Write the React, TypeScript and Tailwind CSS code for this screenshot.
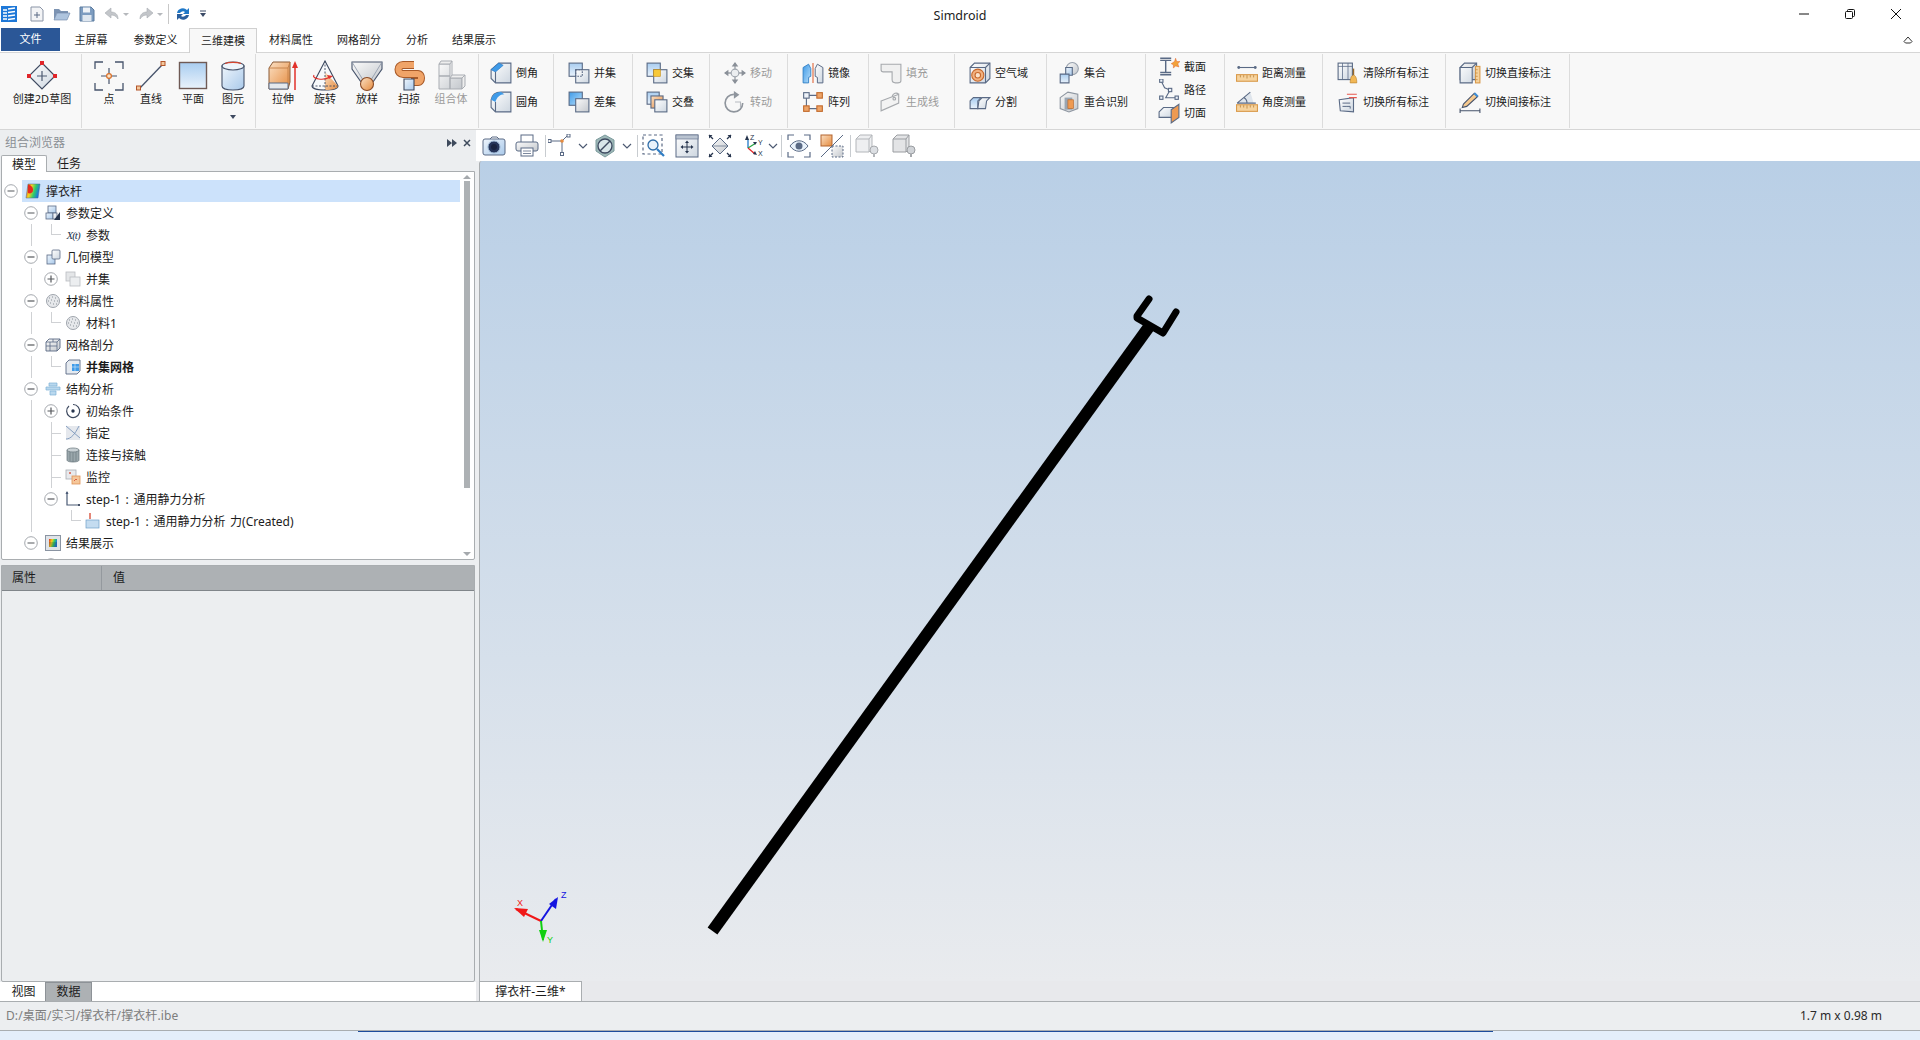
import React from "react";

const L = "#5a6a85";
const Box = ({ c, children }: { c: string; children: React.ReactNode }) => (
  <svg viewBox="0 0 32 32" className={c} fill="none">{children}</svg>
);
const I = ({ children }: { children: React.ReactNode }) => (
  <svg viewBox="0 0 20 20" className="w-[22px] h-[22px]" fill="none">{children}</svg>
);
const T = ({ children }: { children: React.ReactNode }) => (
  <svg viewBox="0 0 16 16" className="w-4 h-4" fill="none">{children}</svg>
);

const Defs = () => (
  <svg className="absolute w-0 h-0">
    <defs>
      <linearGradient id="gb" x1="0" y1="0" x2="1" y2="1"><stop offset="0" stopColor="#eef5fc" /><stop offset="1" stopColor="#a9c9ea" /></linearGradient>
      <linearGradient id="gbs" x1="0" y1="0" x2="1" y2="1"><stop offset="0" stopColor="#3f9be8" /><stop offset="1" stopColor="#b9def9" /></linearGradient>
      <linearGradient id="gp" x1="0" y1="0" x2="0" y2="1"><stop offset="0" stopColor="#a9cdf0" /><stop offset="1" stopColor="#e9f2fb" /></linearGradient>
      <linearGradient id="go" x1="0" y1="0" x2="1" y2="1"><stop offset="0" stopColor="#fbe0c4" /><stop offset="1" stopColor="#e58b3e" /></linearGradient>
      <linearGradient id="gg" x1="0" y1="0" x2="1" y2="1"><stop offset="0" stopColor="#fafafa" /><stop offset="1" stopColor="#c4c8cd" /></linearGradient>
      <linearGradient id="gw" x1="0" y1="0" x2="1" y2="1"><stop offset="0" stopColor="#ffffff" /><stop offset="1" stopColor="#cdd6e0" /></linearGradient>
      <linearGradient id="gr" x1="0" y1="0" x2="1" y2="0.3"><stop offset="0" stopColor="#e62a1e" /><stop offset="0.4" stopColor="#f5d21e" /><stop offset="0.7" stopColor="#2ecb6b" /><stop offset="1" stopColor="#1a76e0" /></linearGradient>
    </defs>
  </svg>
);

const LG = {
  sketch: (
    <Box c="w-8 h-8">
      <path d="M16 3 29 16 16 29 3 16Z" fill="url(#gw)" stroke="#3e4a60" strokeWidth="1.2" />
      <path d="M16 11v10M11 16h10" stroke="#4d5a72" strokeWidth="1.2" />
      <rect x="14" y="1" width="4" height="4" fill="#e0262a" /><rect x="27" y="14" width="4" height="4" fill="#e0262a" /><rect x="1" y="14" width="4" height="4" fill="#e0262a" />
    </Box>
  ),
  point: (
    <Box c="w-8 h-8">
      <path d="M2 9V2h8M22 2h8v7M30 23v7h-8M10 30H2v-7" stroke="#46536b" strokeWidth="1.3" />
      <path d="M16 8v16M8 16h16" stroke="#46536b" strokeWidth="1.2" />
      <circle cx="16" cy="16" r="2.4" fill="#fbe6cc" stroke="#d9702a" strokeWidth="1.2" />
    </Box>
  ),
  line: (
    <Box c="w-8 h-8">
      <path d="M4 29 28 4" stroke="#46536b" strokeWidth="1.3" />
      <rect x="1.5" y="26" width="4" height="4" fill="#f3c89c" stroke="#b3552a" /><rect x="26" y="1.5" width="4" height="4" fill="#f3c89c" stroke="#b3552a" />
    </Box>
  ),
  plane: (
    <Box c="w-8 h-8">
      <rect x="2.5" y="2.5" width="27" height="26" fill="url(#gp)" stroke="#6f5a55" strokeWidth="1.4" />
    </Box>
  ),
  prim: (
    <Box c="w-8 h-8">
      <path d="M5 6v20c0 2.5 5 4 11 4s11-1.500 11-4V6Z" fill="url(#gb)" stroke="#46536b" strokeWidth="1.1" />
      <ellipse cx="16" cy="6" rx="11" ry="4" fill="#eef5fc" stroke="#46536b" strokeWidth="1.1" />
      <path d="M8 3.500C12 2 20 2 24 3.500" stroke="#d6452f" strokeWidth="1.1" />
    </Box>
  ),
  extrude: (
    <Box c="w-8 h-8">
      <path d="M2 8 6 2h17v20l-2 7H2Z" fill="url(#go)" stroke="#8a5a36" strokeWidth="1" />
      <path d="M2 23h19v6H2Z" fill="#e5e8ec" stroke="#5a6a85" strokeWidth="1" />
      <path d="M2 8h19v15M21 8l2-6" stroke="#c47f48" strokeWidth="0.9" />
      <path d="M28 30V6" stroke="#e2322b" strokeWidth="1.5" /><path d="M28 1 31 8H25Z" fill="#e2322b" />
    </Box>
  ),
  revolve: (
    <Box c="w-8 h-8">
      <path d="M16 1 3 26c0 2.500 6 4 13 4s13-1.500 13-4Z" fill="#f7f9fb" stroke="#3e4a60" strokeWidth="1.1" />
      <path d="M16 12 29 26c0 2.500-6 4-13 4Z" fill="url(#go)" />
      <path d="M16 1V30M3 26h26" stroke="#3e4a60" strokeWidth="0.9" strokeDasharray="2 1.500" />
      <path d="M5 15c-3 4 10 6 16 2" stroke="#e2322b" strokeWidth="1.2" /><path d="M24 16 18 15l2 4Z" fill="#e2322b" />
    </Box>
  ),
  loft: (
    <Box c="w-8 h-8">
      <path d="M1 2h30v7l-9 13H10L1 9Z" fill="url(#gg)" stroke="#46536b" strokeWidth="1.1" />
      <path d="M1 2 12 20M31 2 20 20" stroke="#8c97a8" strokeWidth="0.8" />
      <circle cx="16" cy="24" r="6.500" fill="url(#go)" stroke="#8a4a25" strokeWidth="1.1" />
    </Box>
  ),
  sweep: (
    <Box c="w-8 h-8">
      <path d="M21 5H10C4 5 4 14 10 14H25C29 14 29 22 25 22H18" stroke="#a85a28" strokeWidth="8" strokeLinejoin="round" />
      <path d="M21 5H10C4 5 4 14 10 14H25C29 14 29 22 25 22H18" stroke="#f0a468" strokeWidth="6" strokeLinejoin="round" />
      <path d="M11 19h10v11H11Z" fill="url(#gb)" stroke="#3e4a60" strokeWidth="1.1" />
    </Box>
  ),
  combo: (
    <Box c="w-8 h-8">
      <path d="M4 4h11v12H4ZM4 16h11v13H4ZM15 18h12v11H15Z" fill="url(#gg)" stroke="#a9adb3" strokeWidth="1" />
      <path d="M4 4l2-3h11l-2 3ZM15 18l2-3h13l-3 3ZM17 1v14M27 18v11l3-3V15" fill="#eee" stroke="#a9adb3" strokeWidth="1" />
    </Box>
  ),
};

const SM = {
  chamfer: <I><path d="M1 7 8 1h11v18H5l-4-4Z" fill="url(#gw)" stroke={L} /><path d="M1 7 8 1l4 2-7 6Z" fill="#3f9be8" stroke="#2a7bc8" strokeWidth=".6" /><path d="M5 9v10" stroke={L} /></I>,
  fillet: <I><path d="M1 8C2 3 6 1 10 1h9v18H5l-4-4Z" fill="url(#gw)" stroke={L} /><path d="M1 8C2 3 6 1 10 1l3 2C9 3 6 6 5 10Z" fill="#3f9be8" /><path d="M5 10v9" stroke={L} /></I>,
  union: <I><rect x="1" y="1" width="12" height="12" fill="url(#gp)" stroke={L} /><rect x="7" y="7" width="12" height="12" fill="url(#gw)" stroke={L} /><rect x="7" y="7" width="6" height="6" stroke={L} strokeDasharray="1.500 1" fill="none" /></I>,
  diff: <I><rect x="1" y="1" width="12" height="12" fill="url(#gbs)" stroke={L} /><rect x="7" y="7" width="12" height="12" fill="url(#gg)" stroke={L} /></I>,
  inter: <I><rect x="1" y="1" width="12" height="12" fill="url(#gp)" stroke={L} /><rect x="7" y="7" width="12" height="12" fill="url(#gw)" stroke={L} /><rect x="7" y="7" width="6" height="6" fill="#f7c93a" stroke="#c89018" strokeWidth=".6" /></I>,
  overlap: <I><rect x="1" y="1" width="11" height="11" fill="url(#gp)" stroke={L} /><rect x="4.500" y="4.500" width="11" height="11" fill="url(#go)" stroke={L} /><rect x="8" y="8" width="11" height="11" fill="url(#gw)" stroke={L} /></I>,
  move: <I><path d="M10 1v18M1 10h18" stroke="#9aa0a8" strokeWidth="1.200" /><path d="M10 0 13 4H7ZM10 20 7 16h6ZM0 10l4-3v6ZM20 10l-4 3V7Z" fill="#8a9098" /><circle cx="10" cy="10" r="3.500" fill="#eceef0" stroke="#a0a6ae" /></I>,
  rotate: <I><path d="M9 3a8 8 0 1 0 8 8" stroke="#8f959d" strokeWidth="1.500" /><path d="M9 0v7l5-3.500Z" fill="#8f959d" /><path d="M10 10h5v5" stroke="#b5b9bf" /></I>,
  mirror: <I><path d="M1 19V5l5-3 2 4v7l-2 1v5Z" fill="url(#gbs)" stroke="#2f7dc4" strokeWidth=".8" /><path d="M19 19V5l-5-3-2 4v7l2 1v5Z" fill="url(#gw)" stroke={L} strokeWidth=".9" /><path d="M10 1v18" stroke="#e0663a" strokeWidth="1" /></I>,
  array: <I><path d="M4 4h12M4 4v12M4 16h12" stroke={L} /><rect x="1.500" y="1.500" width="5" height="5" fill="#eef3f9" stroke={L} /><rect x="13.500" y="1.500" width="5" height="5" fill="#eda468" stroke="#c26a2c" /><rect x="1.500" y="13.500" width="5" height="5" fill="#eda468" stroke="#c26a2c" /><rect x="13.500" y="13.500" width="5" height="5" fill="#eda468" stroke="#c26a2c" /></I>,
  fill: <I><path d="M1 2h18v15c0 1-1 2-3 2h-2c-2 0-3-1-3-3V9H3C2 9 1 8 1 7Z" fill="#f0f0f0" stroke="#a6a9ad" /></I>,
  gen: <I><path d="M1 9 17 3v8L1 18Z" fill="#f3f3f3" stroke="#a6a9ad" /><path d="M11 5c1-3 4-4 6-2" stroke="#a6a9ad" /><circle cx="13" cy="7" r="1.200" stroke="#a6a9ad" /></I>,
  air: <I><path d="M1 5 5 1h14v14l-4 4H1Z" fill="url(#gw)" stroke={L} /><path d="M1 5h14v14M15 5l4-4" stroke={L} /><circle cx="8" cy="12" r="5.500" fill="#f1b180" stroke="#c7682c" /><circle cx="8" cy="12" r="2.500" fill="#fae3cc" stroke="#c7682c" /></I>,
  split: <I><path d="M1 9 4 6h7l-3 3v7H1Z" fill="url(#gp)" stroke={L} /><path d="M9 9l3-3h7l-3 3-1 7H8Z" fill="url(#gw)" stroke={L} /></I>,
  set: <I><circle cx="13" cy="6" r="5.500" fill="url(#gg)" stroke="#98a1ad" /><path d="M7 5h6v7H7Z" fill="url(#gb)" stroke={L} /><path d="M2 11h8v8H2Z" fill="url(#gp)" stroke={L} /></I>,
  coin: <I><path d="M2 6 9 1l9 2v13l-8 3-8-3Z" fill="url(#gg)" stroke="#8e96a1" /><rect x="6" y="6" width="7" height="11" fill="#9aa5b2" /><rect x="9" y="8" width="5" height="8" fill="#ee9a52" stroke="#b9682d" strokeWidth=".6" /></I>,
  section: <I><path d="M2 2h10M2 4h10M7 4v11M2 17h10M2 15h10" stroke={L} strokeWidth="1.300" /><path d="M15 5l1-3 1 3 3 0-2 2 1 3-3-1-2 2V8l-2-1Z" fill="#f2a23a" stroke="#e25a2a" strokeWidth=".4" /></I>,
  path: <I><path d="M3 2 6 8l5 2-4 7h9" stroke={L} /><rect x="1.500" y="0" width="3" height="3" fill="#eef3f9" stroke={L} /><rect x="9.500" y="8.500" width="3" height="3" fill="#eef3f9" stroke={L} /><rect x="1.500" y="15.500" width="3" height="3" fill="#eef3f9" stroke={L} /><rect x="15.500" y="15.500" width="3" height="3" fill="#eef3f9" stroke={L} /></I>,
  cut: <I><path d="M1 9 5 5h9v9H1Z" fill="url(#gw)" stroke={L} /><path d="M12 7l7-5v12l-7 5Z" fill="#ee9a52" stroke={L} /></I>,
  dist: <I><path d="M2 5h16" stroke={L} /><circle cx="2.500" cy="5" r="1.300" fill={L} /><circle cx="17.500" cy="5" r="1.300" fill={L} /><rect x="0.500" y="11.500" width="19" height="6" fill="#f6d39e" stroke="#d99a4a" /><path d="M4 12v2M7 12v2M10 12v3M13 12v2M16 12v2" stroke="#b97f35" strokeWidth=".7" /></I>,
  ang: <I><path d="M1 11 13 1l3 10Z" fill="#dfe5ec" /><path d="M1 11 13 1M1 11h17M7 6c2 1 3 3 3 5" stroke={L} /><rect x="0.500" y="12.500" width="19" height="6" fill="#f6d39e" stroke="#d99a4a" /><path d="M4 13v2M7 13v2M10 13v3M13 13v2M16 13v2" stroke="#b97f35" strokeWidth=".7" /></I>,
  clear: <I><rect x="1" y="1" width="13" height="15" fill="url(#gw)" stroke={L} /><path d="M1 4h13M5 1v15M10 1v15" stroke={L} strokeWidth=".7" /><path d="M15 6v6" stroke="#9a6a2a" strokeWidth="1.300" /><path d="M12 19c0-4 1-7 3-7s3 3 3 7Z" fill="#f2b856" stroke="#b9812d" strokeWidth=".6" /></I>,
  swall: <I><path d="M2 8 15 6v13L3 18Z" fill="url(#gw)" stroke={L} /><path d="M5 11h7M5 14h4M9 14h3v2" stroke={L} strokeWidth=".9" /><path d="M9 3h9M11 6h7" stroke="#e8574e" strokeWidth="1" /></I>,
  direct: <I><path d="M1 5 5 1h11v15H1Z" fill="url(#gg)" stroke={L} /><path d="M1 5h11v14H1ZM12 5l4-4" stroke={L} fill="url(#gw)" /><rect x="15" y="4" width="4" height="15" fill="#f6d39e" stroke="#d99a4a" /><path d="M15 7h2M15 10h2M15 13h2M15 16h2" stroke="#b97f35" strokeWidth=".6" /></I>,
  indirect: <I><path d="M4 12 14 2l3 3L7 14l-4 1Z" fill="#f6c98e" stroke="#46536b" /><path d="M14 2l3 3" stroke="#3f8fd8" strokeWidth="2" /><path d="M1 18h18M1 16v4M19 16v4" stroke="#46536b" /></I>,
};

const TR = {
  root: <T><path d="M3 1h12l-2 14H1Z" fill="url(#gr)" stroke="#4a6a90" strokeWidth=".5" /><path d="M3 2c3 0 5 2 5 5s-3 4-5 3Z" fill="#e62a1e" /></T>,
  params: <T><rect x="3" y="1" width="8" height="7" fill="url(#gb)" stroke={L} strokeWidth=".8" /><rect x="1" y="8" width="7" height="6" fill="url(#gb)" stroke={L} strokeWidth=".8" /><rect x="8" y="8" width="4" height="6" fill="url(#gw)" stroke={L} strokeWidth=".8" /><path d="M15 7v8H9Z" fill="#26344d" /></T>,
  geom: <T><rect x="2" y="6" width="8" height="9" fill="url(#gb)" stroke={L} strokeWidth=".8" /><rect x="7" y="1" width="8" height="9" rx="1" fill="url(#gw)" stroke={L} strokeWidth=".8" /></T>,
  union: <T><rect x="1" y="1" width="9" height="9" fill="#e4e6e8" stroke="#b9bcc0" strokeWidth=".8" /><rect x="5" y="6" width="10" height="9" fill="#eceef0" stroke="#b9bcc0" strokeWidth=".8" /></T>,
  mat: <T><circle cx="8" cy="8" r="6.500" fill="#e6e8eb" stroke="#9fa5ad" /><path d="M4 5h1M7 4h1M10 5h1M3 8h1M6 7h1M9 8h1M12 8h1M5 10h1M8 11h1M11 11h1" stroke="#a8adb4" strokeWidth="1.300" /></T>,
  mesh: <T><path d="M1 5 4 2h11v9l-3 3H1Z" fill="url(#gg)" stroke={L} strokeWidth=".9" /><path d="M1 5h11v9M12 5l3-3M5 5v9M1 9h11M8 2v3" stroke={L} strokeWidth=".8" /></T>,
  meshB: <T><path d="M1 4 4 1h11v11l-3 3H1Z" fill="#e5eaf0" stroke={L} strokeWidth=".9" /><rect x="7" y="5" width="7" height="7" fill="#3f9be8" /><path d="M7 8h7M10 5v7" stroke="#d6ecfb" strokeWidth=".6" /></T>,
  ana: <T><path d="M4 2h8v3H4ZM1 6h14v3H1ZM5 10h6v4H5Z" fill="#b9d8ee" stroke="#7fb2d6" strokeWidth=".7" /></T>,
  init: <T><path d="M4 3a6.500 6.500 0 1 0 4-1.500" stroke="#3e4a60" strokeWidth="1.200" /><circle cx="8" cy="8" r="1.700" fill="#26344d" /></T>,
  assign: <T><rect x="1" y="1" width="14" height="14" fill="#e5e8ed" /><path d="M1 1l14 12M1 14c5 0 9-5 13-13" stroke="#6f8db5" strokeWidth=".8" /></T>,
  contact: <T><path d="M2 3v10c0 1.500 3 2 6 2s6-.5 6-2V3Z" fill="#9aa7ac" stroke="#66747a" strokeWidth=".7" /><ellipse cx="8" cy="3" rx="6" ry="2" fill="#c9d1d5" stroke="#66747a" strokeWidth=".7" /><path d="M5 5v9M8 5.500V15M11 5v9" stroke="#66747a" strokeWidth=".6" /></T>,
  mon: <T><rect x="1" y="1" width="10" height="9" fill="#e8eaed" stroke="#a9adb3" strokeWidth=".8" /><rect x="7" y="7" width="8" height="8" fill="#f5c79a" stroke="#df9255" strokeWidth=".8" /><path d="M4 4h2M5 3v2" stroke="#d6452f" strokeWidth=".8" /><path d="M9 12l2-2 1 1" stroke="#d6452f" strokeWidth=".8" /></T>,
  step: <T><path d="M2 1v13h13" stroke="#4a5a75" strokeWidth="1.200" /><path d="M0.500 3 2 0l1.500 3Z" fill="#4a5a75" /><circle cx="14" cy="14" r="1" fill="#26344d" /></T>,
  force: <T><rect x="1" y="7" width="13" height="8" fill="#c4dcf0" stroke="#6fa0c8" strokeWidth=".7" /><path d="M5 0v6" stroke="#d6452f" strokeWidth="1.300" /></T>,
  result: <T><rect x="0.500" y="0.500" width="15" height="15" fill="#dfe3e8" stroke="#8a94a2" /><rect x="4" y="4" width="8" height="8" fill="url(#gr)" /><rect x="4" y="7" width="8" height="5" fill="#2c3e2e" fillOpacity=".25" /></T>,
  res2: <T><path d="M6 2h5v5H6Z" fill="#3f8fd8" /></T>,
};

const Label = ({ children, dim }: { children: React.ReactNode; dim?: boolean }) => (
  <span className={dim ? "text-[11px] leading-[14px] whitespace-nowrap text-[#9b9b9b]" : "text-[11px] leading-[14px] whitespace-nowrap text-[#1c1c1c]"}>{children}</span>
);

const Large = ({ icon, text, dim, c = "w-[42px]" }: { icon: React.ReactNode; text: string; dim?: boolean; c?: string }) => (
  <div className={`${c} flex flex-col items-center pt-[6px]`}>
    {icon}
    <Label dim={dim}>{text}</Label>
  </div>
);

const Small = ({ rows, c, three }: { rows: [React.ReactNode, string, boolean?][]; c: string; three?: boolean }) => (
  <div className={`${c} shrink-0 border-r border-[#dcdcdc] my-[1px] flex flex-col ${three ? "pt-[1px]" : "pt-[4px]"}`}>
    {rows.map(([icon, t, dim]) => (
      <div key={t} className={`flex items-center gap-[4px] ${three ? "h-[23px]" : "h-[29px]"}`}>
        <span className="w-[22px] flex justify-center shrink-0">{icon}</span>
        <Label dim={dim}>{t}</Label>
      </div>
    ))}
  </div>
);

const Ribbon = () => (
  <div className="h-[78px] shrink-0 bg-[#f8f8f8] border-y border-[#d6d6d6] flex pt-0">
    <div className="w-[82px] shrink-0 border-r border-[#dcdcdc] my-[1px] flex justify-center pl-[3px]">
      <div className="flex flex-col items-center pt-[6px]">{LG.sketch}<Label>创建2D草图</Label></div>
    </div>
    <div className="w-[174px] shrink-0 border-r border-[#dcdcdc] my-[1px] flex pl-[6px]">
      <Large icon={LG.point} text="点" />
      <Large icon={LG.line} text="直线" />
      <Large icon={LG.plane} text="平面" />
      <div className="relative">
        <Large icon={LG.prim} text="图元" c="w-[38px]" />
        <span className="block mx-auto mt-[9px] w-0 h-0 border-x-[3px] border-x-transparent border-t-[4px] border-t-[#3e4a60]" />
      </div>
    </div>
    <div className="w-[223px] shrink-0 border-r border-[#dcdcdc] my-[1px] flex pl-[6px]">
      <Large icon={LG.extrude} text="拉伸" />
      <Large icon={LG.revolve} text="旋转" />
      <Large icon={LG.loft} text="放样" />
      <Large icon={LG.sweep} text="扫掠" />
      <Large icon={LG.combo} text="组合体" dim />
    </div>
    <Small c="w-[75px] pl-[11px]" rows={[[SM.chamfer, "倒角"], [SM.fillet, "圆角"]]} />
    <Small c="w-[79px] pl-[14px]" rows={[[SM.union, "并集"], [SM.diff, "差集"]]} />
    <Small c="w-[77px] pl-[13px]" rows={[[SM.inter, "交集"], [SM.overlap, "交叠"]]} />
    <Small c="w-[78px] pl-[14px]" rows={[[SM.move, "移动", true], [SM.rotate, "转动", true]]} />
    <Small c="w-[81px] pl-[14px]" rows={[[SM.mirror, "镜像"], [SM.array, "阵列"]]} />
    <Small c="w-[86px] pl-[11px]" rows={[[SM.fill, "填充", true], [SM.gen, "生成线", true]]} />
    <Small c="w-[92px] pl-[14px]" rows={[[SM.air, "空气域"], [SM.split, "分割"]]} />
    <Small c="w-[99px] pl-[11px]" rows={[[SM.set, "集合"], [SM.coin, "重合识别"]]} />
    <Small c="w-[79px] pl-[12px]" three rows={[[SM.section, "截面"], [SM.path, "路径"], [SM.cut, "切面"]]} />
    <Small c="w-[98px] pl-[11px]" rows={[[SM.dist, "距离测量"], [SM.ang, "角度测量"]]} />
    <Small c="w-[123px] pl-[14px]" rows={[[SM.clear, "清除所有标注"], [SM.swall, "切换所有标注"]]} />
    <Small c="w-[124px] pl-[13px]" rows={[[SM.direct, "切换直接标注"], [SM.indirect, "切换间接标注"]]} />
  </div>
);

const TitleBar = () => (
  <div className="h-[28px] shrink-0 grid grid-cols-[1fr_auto_1fr] items-center bg-white">
    <div className="flex items-center h-full">
      <svg viewBox="0 0 16 16" className="w-4 h-4 ml-[1px]">
        <rect width="16" height="16" fill="#1e78d8" />
        <path d="M2 4h4M2 7h4M2 10h4M2 13h4M7 3l7-1M7 6.500l7-1M7 10l7-1M7 13.500l7-1" stroke="#fff" strokeWidth="1.300" />
      </svg>
      <svg viewBox="0 0 16 16" className="w-4 h-4 ml-[12px]"><path d="M2 1h9l3 3v11H2Z" fill="#f3f4f6" stroke="#8a94a6" /><path d="M8 6v6M5 9h6" stroke="#5a6a85" /></svg>
      <svg viewBox="0 0 18 16" className="w-[18px] h-4 ml-[8px]"><path d="M1 3h5l2 2h7v2H4L1 14Z" fill="#7c93b2" /><path d="M4 7h13l-3 7H1Z" fill="#aec4de" stroke="#6b84a6" strokeWidth=".6" /></svg>
      <svg viewBox="0 0 16 16" className="w-4 h-4 ml-[8px]"><path d="M1 1h11l3 3v11H1Z" fill="#7d9cc0" stroke="#5a7a9e" /><rect x="4" y="1.500" width="7" height="5" fill="#eef2f7" /><rect x="3.500" y="9" width="9" height="6" fill="#dfe7f0" /></svg>
      <svg viewBox="0 0 16 14" className="w-4 h-[14px] ml-[9px]"><path d="M7 1 1 6l6 5V8c3 0 5 1 7 4 0-5-3-7-7-7Z" fill="#c3c6ca" stroke="#a8acb1" strokeWidth=".6" /></svg>
      <span className="ml-[3px] w-0 h-0 border-x-[3px] border-x-transparent border-t-[3px] border-t-[#b5b8bc]" />
      <svg viewBox="0 0 16 14" className="w-4 h-[14px] ml-[9px]"><path d="M9 1l6 5-6 5V8c-3 0-5 1-7 4 0-5 3-7 7-7Z" fill="#c3c6ca" stroke="#a8acb1" strokeWidth=".6" /></svg>
      <span className="ml-[3px] w-0 h-0 border-x-[3px] border-x-transparent border-t-[3px] border-t-[#b5b8bc]" />
      <span className="ml-[5px] w-px h-5 bg-[#c8c8c8]" />
      <svg viewBox="0 0 16 16" className="w-4 h-4 ml-[6px]"><path d="M2 7a6 6 0 0 1 10-3l2-2v6H8l2-2a3.500 3.500 0 0 0-5 1Z" fill="#1f78c8" /><path d="M14 9a6 6 0 0 1-10 3l-2 2V8h6l-2 2a3.500 3.500 0 0 0 5-1Z" fill="#2a5f9e" /></svg>
      <svg viewBox="0 0 8 8" className="w-2 h-2 ml-[8px]"><path d="M1 1h6" stroke="#3a4a66" strokeWidth="1" /><path d="M1 3h6L4 7Z" fill="#3a4a66" /></svg>
    </div>
    <span className="text-[12.500px] text-[#222] leading-none mt-[5px]">Simdroid</span>
    <div className="flex items-center justify-end h-full pr-[18px] gap-[34px]">
      <svg viewBox="0 0 12 12" className="w-3 h-3"><path d="M1 6h10" stroke="#111" strokeWidth="1" /></svg>
      <svg viewBox="0 0 12 12" className="w-3 h-3"><rect x="1.500" y="3.500" width="7" height="7" rx="1" stroke="#111" fill="none" /><path d="M3.500 3.500v-1a1 1 0 0 1 1-1h5a1 1 0 0 1 1 1v5a1 1 0 0 1-1 1h-1" stroke="#111" fill="none" /></svg>
      <svg viewBox="0 0 12 12" className="w-3 h-3"><path d="M1 1l10 10M11 1 1 11" stroke="#111" strokeWidth="1" /></svg>
    </div>
  </div>
);

const TabItem = ({ c, t, active }: { c: string; t: string; active?: boolean }) => (
  <div className={`${c} flex items-center justify-center text-[11px] text-[#1c1c1c] ${active ? "bg-[#f8f8f8] border-x border-t border-[#d0d0d0] h-[25px] -mb-px relative z-10" : "h-[24px]"}`}>{t}</div>
);

const Tabs = () => (
  <div className="h-[24px] shrink-0 flex items-start pl-[1px] bg-white relative">
    <div className="w-[59px] h-[23px] bg-[#2b5797] text-white text-[11px] flex items-center justify-center">文件</div>
    <TabItem c="w-[62px]" t="主屏幕" />
    <TabItem c="w-[67px]" t="参数定义" />
    <TabItem c="w-[68px]" t="三维建模" active />
    <TabItem c="w-[68px]" t="材料属性" />
    <TabItem c="w-[68px]" t="网格剖分" />
    <TabItem c="w-[48px]" t="分析" />
    <TabItem c="w-[66px]" t="结果展示" />
    <div className="flex-1 flex justify-end pr-[7px] pt-[7px]">
      <svg viewBox="0 0 10 9" className="w-[10px] h-[9px]"><path d="M1 6.500 5 2l4 4.500-1.500 1.500h-5Z" stroke="#333" fill="none" /></svg>
    </div>
  </div>
);

type Row = { lvl: 0 | 1 | 2 | 3; t: string; icon: React.ReactNode; tog?: "-" | "+"; v30?: boolean; elbow?: "e50" | "t50" | "e70"; bold?: boolean; sel?: boolean };

const rows: Row[] = [
  { lvl: 0, t: "撑衣杆", icon: TR.root, tog: "-", sel: true },
  { lvl: 1, t: "参数定义", icon: TR.params, tog: "-" },
  { lvl: 2, t: "参数", icon: <span className="[font-family:'Liberation_Serif',serif] italic text-[11px] text-[#26344d] tracking-[-1px] whitespace-nowrap">X(t)</span>, v30: true, elbow: "e50" },
  { lvl: 1, t: "几何模型", icon: TR.geom, tog: "-" },
  { lvl: 2, t: "并集", icon: TR.union, tog: "+", v30: true },
  { lvl: 1, t: "材料属性", icon: TR.mat, tog: "-" },
  { lvl: 2, t: "材料1", icon: TR.mat, v30: true, elbow: "e50" },
  { lvl: 1, t: "网格剖分", icon: TR.mesh, tog: "-" },
  { lvl: 2, t: "并集网格", icon: TR.meshB, v30: true, elbow: "e50", bold: true },
  { lvl: 1, t: "结构分析", icon: TR.ana, tog: "-" },
  { lvl: 2, t: "初始条件", icon: TR.init, tog: "+", v30: true },
  { lvl: 2, t: "指定", icon: TR.assign, v30: true, elbow: "t50" },
  { lvl: 2, t: "连接与接触", icon: TR.contact, v30: true, elbow: "t50" },
  { lvl: 2, t: "监控", icon: TR.mon, v30: true, elbow: "t50" },
  { lvl: 2, t: "step-1 : 通用静力分析", icon: TR.step, tog: "-", v30: true },
  { lvl: 3, t: "step-1 : 通用静力分析 力(Created)", icon: TR.force, v30: true, elbow: "e70" },
  { lvl: 1, t: "结果展示", icon: TR.result, tog: "-" },
  { lvl: 2, t: "", icon: TR.res2, tog: "-" },
];

const togPos = { 0: "left-[2px]", 1: "left-[22px]", 2: "left-[42px]", 3: "left-[62px]" };
const iconPos = { 0: "ml-[23px]", 1: "ml-[43px]", 2: "ml-[63px]", 3: "ml-[83px]" };

const Toggle = ({ sign, c }: { sign: "-" | "+"; c: string }) => (
  <svg viewBox="0 0 14 14" className={`absolute top-[4px] w-[14px] h-[14px] ${c}`}>
    <circle cx="7" cy="7" r="6.300" fill="#fff" stroke="#a4a8ad" />
    <path d={sign === "-" ? "M3.500 7h7" : "M3.500 7h7M7 3.500v7"} stroke="#55585c" strokeWidth="1.200" />
  </svg>
);

const TreeRow = ({ r }: { r: Row }) => (
  <div className="h-[22px] relative flex items-center">
    {r.sel && <div className="absolute left-[20px] right-[1px] inset-y-0 bg-[#cce2fb]" />}
    {r.v30 && <span className="absolute left-[29px] inset-y-0 w-px bg-[#cfd1d4]" />}
    {r.elbow === "e50" && <span className="absolute left-[49px] top-0 h-[11px] w-[10px] border-l border-b border-[#cfd1d4]" />}
    {r.elbow === "t50" && <><span className="absolute left-[49px] inset-y-0 w-px bg-[#cfd1d4]" /><span className="absolute left-[49px] top-[11px] w-[10px] h-px bg-[#cfd1d4]" /></>}
    {r.elbow === "e70" && <span className="absolute left-[69px] top-0 h-[11px] w-[10px] border-l border-b border-[#cfd1d4]" />}
    {r.tog && <Toggle sign={r.tog} c={togPos[r.lvl]} />}
    <span className={`relative w-4 h-4 flex items-center justify-center shrink-0 ${iconPos[r.lvl]}`}>{r.icon}</span>
    <span className={`relative ml-[5px] text-[12px] leading-none whitespace-nowrap text-[#1c1c1c] [word-spacing:1.500px] pt-[1px] ${r.bold ? "font-bold" : ""}`}>{r.t}</span>
  </div>
);

const LeftPanel = () => (
  <div className="w-[476px] shrink-0 flex flex-col bg-[#eceef0]">
    <div className="h-[25px] shrink-0 flex items-center pl-[5px] pr-[5px] justify-between">
      <span className="text-[12px] text-[#8a8f94]">组合浏览器</span>
      <div className="flex items-center gap-[6px]">
        <svg viewBox="0 0 10 8" className="w-[10px] h-2"><path d="M0 0l5 4-5 4ZM5 0l5 4-5 4Z" fill="#3e4a5c" /></svg>
        <svg viewBox="0 0 8 8" className="w-2 h-2"><path d="M1 1l6 6M7 1 1 7" stroke="#3e4a5c" strokeWidth="1.500" /></svg>
      </div>
    </div>
    <div className="h-[16px] shrink-0 flex pl-[1px] relative">
      <div className="w-[46px] h-[17px] pt-[1px] bg-white border-x border-t border-[#a9adb0] rounded-t-[2px] text-[12px] flex items-center justify-center text-[#1c1c1c] relative z-10">模型</div>
      <div className="w-[44px] pt-[1px] text-[12px] flex items-center justify-center text-[#1c1c1c]">任务</div>
    </div>
    <div className="h-[389px] shrink-0 mr-[1px] ml-[1px] bg-white border border-[#a9adb0] rounded-b-[2px] flex overflow-hidden">
      <div className="flex-1 overflow-hidden pt-[8px]">
        {rows.map((r, i) => <TreeRow key={i} r={r} />)}
      </div>
      <div className="w-[13px] shrink-0 flex flex-col items-center pt-[3px] pr-[1px] relative">
        <span className="w-0 h-0 border-x-[4px] border-x-transparent border-b-[4px] border-b-[#a5a9ad]" />
        <span className="w-[6px] h-[307px] mt-[2px] bg-[#adb1b4]" />
        <span className="mt-auto mb-[3px] w-0 h-0 border-x-[4px] border-x-transparent border-t-[4px] border-t-[#a5a9ad]" />
      </div>
    </div>
    <div className="mt-[5px] h-[417px] shrink-0 ml-[1px] mr-[1px] border border-[#a9adb0] rounded-b-[2px] flex flex-col">
      <div className="h-[25px] bg-[#adb1b4] border-b border-[#80858a] flex items-center text-[12px] text-[#1c1c1c]">
        <span className="w-[100px] pl-[10px] border-r border-[#94999e] h-full flex items-center">属性</span>
        <span className="pl-[11px]">值</span>
      </div>
    </div>
    <div className="h-[19px] shrink-0 bg-white flex text-[12px] text-[#1c1c1c]">
      <span className="w-[45px] flex items-center justify-center pl-[2px]">视图</span>
      <span className="w-[47px] bg-[#adb1b4] border-x border-t border-[#8d9297] flex items-center justify-center">数据</span>
    </div>
  </div>
);

const Chev = ({ c }: { c: string }) => (
  <svg viewBox="0 0 12 12" className={`w-3 h-3 ${c}`}><path d="M2 4l4 4 4-4" stroke="#4d5a72" strokeWidth="1.200" fill="none" /></svg>
);
const Sep = ({ c }: { c: string }) => <span className={`w-px h-[22px] bg-[#c8ccd0] ${c}`} />;
const TB = ({ c, children }: { c: string; children: React.ReactNode }) => (
  <svg viewBox="0 0 24 24" className={`w-6 h-6 ${c}`} fill="none">{children}</svg>
);

const Toolbar = () => (
  <div className="h-[31px] shrink-0 bg-white flex items-center">
    <TB c="ml-[6px]"><rect x="1" y="5" width="22" height="16" rx="2" fill="url(#gb)" stroke={L} /><path d="M8 5l2-2h5l2 2" stroke={L} /><circle cx="12" cy="13" r="6" fill="#26355a" stroke="#9bb5d2" /><circle cx="12" cy="13" r="3" fill="#1a2440" /></TB>
    <TB c="ml-[9px]"><rect x="6" y="1" width="12" height="8" fill="#fff" stroke={L} /><rect x="1" y="8" width="22" height="9" rx="2" fill="url(#gg)" stroke={L} /><rect x="6" y="14" width="12" height="8" fill="#fff" stroke={L} /><path d="M8 17h8M8 19.500h8" stroke={L} strokeWidth=".8" /></TB>
    <Sep c="ml-[6px]" />
    <TB c="ml-[2px]"><path d="M1 7h13M14 7v13M14 7 20 1" stroke={L} /><rect x="0" y="5.500" width="3" height="3" fill="#fff" stroke={L} /><rect x="12.500" y="18.500" width="3" height="3" fill="#fff" stroke={L} /><rect x="19" y="0" width="3" height="3" fill="#fff" stroke={L} /><circle cx="14" cy="7" r="1.800" fill="#e58b3e" /></TB>
    <Chev c="ml-[5px]" />
    <TB c="ml-[4px]"><path d="M12 1 21 6v11l-9 6-9-6V6Z" fill="#9eb8b8" stroke="#7a9a9c" /><circle cx="12" cy="12" r="7" fill="#d9e6ea" stroke="#3e4a60" strokeWidth="1.300" /><path d="M7 17 17 7" stroke="#3e4a60" strokeWidth="1.500" /></TB>
    <Chev c="ml-[4px]" />
    <Sep c="ml-[4px]" />
    <TB c="ml-[4px]"><rect x="1" y="1" width="19" height="19" stroke={L} strokeWidth="1.200" strokeDasharray="3 2.500" /><circle cx="11" cy="11" r="5" fill="#e9f2fb" stroke="#2f6da8" strokeWidth="1.300" /><path d="M15 15l7 7" stroke="#2f7dc4" strokeWidth="2.200" /></TB>
    <TB c="ml-[9px]"><rect x="1" y="1" width="22" height="22" fill="url(#gw)" stroke={L} /><rect x="1" y="1" width="22" height="4" fill="#b9c3d0" stroke={L} strokeWidth=".6" /><path d="M12 8v10M7 13h10" stroke="#26344d" /><path d="M12 6.500 14 9h-4ZM12 19.500 10 17h4ZM5.500 13 8 11v4ZM18.500 13 16 15v-4Z" fill="#26344d" /></TB>
    <TB c="ml-[9px]"><path d="M12 4 20 12 12 20 4 12Z" fill="url(#gg)" stroke={L} /><path d="M4 12h16" stroke={L} strokeWidth=".7" /><path d="M1 1l4 4M23 1l-4 4M1 23l4-4M23 23l-4-4" stroke="#26344d" strokeWidth="1.300" /><path d="M1 1h3.500L1 4.500ZM23 1h-3.500L23 4.500ZM1 23h3.500L1 19.500ZM23 23h-3.500l3.500-3.500Z" fill="#26344d" /></TB>
    <TB c="ml-[9px]"><path d="M7 14V5" stroke="#1f78c8" strokeWidth="1.300" /><path d="M7 14l8-5" stroke="#28a745" strokeWidth="1.300" /><path d="M7 14l7 6" stroke="#e0262a" strokeWidth="1.300" /><path d="M8 6 6 1l-2 5ZM16 8l-4 0 2 3ZM16 21l-4-1 2-3Z" fill="#26344d" /><text x="9" y="6" fontSize="7" fill="#26344d" fontFamily="Liberation Sans">Z</text><text x="17" y="11" fontSize="7" fill="#26344d" fontFamily="Liberation Sans">Y</text><text x="17" y="22" fontSize="7" fill="#26344d" fontFamily="Liberation Sans">X</text></TB>
    <Chev c="ml-[2px]" />
    <Sep c="ml-[2px]" />
    <TB c="ml-[5px]"><path d="M1 6V1h6M17 1h6v5M23 18v5h-6M7 23H1v-5" stroke={L} strokeWidth="1.200" /><path d="M3 12c5-7 13-7 18 0-5 7-13 7-18 0Z" fill="#e9f2fb" stroke={L} /><circle cx="12" cy="12" r="3.500" fill="#5a6a85" /></TB>
    <TB c="ml-[9px]"><rect x="1" y="1" width="11" height="11" fill="url(#go)" stroke="#b3652f" /><path d="M1 23 23 1" stroke={L} /><rect x="12" y="12" width="11" height="11" fill="url(#gg)" stroke={L} strokeDasharray="2 1.500" /></TB>
    <Sep c="ml-[6px]" />
    <TB c="ml-[4px]"><path d="M1 5 5 1h12v14l-3 3H1Z" fill="#eeeff1" stroke="#b3b6ba" /><path d="M1 5h13v13M14 5l3-4" stroke="#b3b6ba" /><circle cx="19" cy="16" r="4" fill="#dcdfe3" stroke="#a6a9ad" /><path d="M18 20h2v3h-2Z" fill="#b3b6ba" /></TB>
    <TB c="ml-[13px]"><path d="M1 5 5 1h12v14l-3 3H1Z" fill="#e3e4e6" stroke="#9a9da1" /><path d="M1 5h13v13M14 5l3-4" stroke="#9a9da1" /><circle cx="19" cy="16" r="4" fill="#d0d3d7" stroke="#9a9da1" /><path d="M18 20h2v3h-2Z" fill="#a6a9ad" /></TB>
  </div>
);

const Viewport = () => (
  <div className="flex-1 ml-[3px] border-l border-[#a9adb0] rounded-tl-[3px] bg-gradient-to-b from-[#b9cfe6] to-[#e9ebee] min-h-0">
    <svg viewBox="480 161 1440 820" className="w-full h-full block">
      <path d="M712.500 931 1151 324" stroke="#000" strokeWidth="12" />
      <path d="M1149 299 1137 316 1137 318 1163 333 1176 312" stroke="#000" strokeWidth="7" strokeLinecap="round" strokeLinejoin="round" fill="none" />
      <path d="M541 921 516 909" stroke="#f01818" strokeWidth="2" /><path d="M514 908 528 909 524 917Z" fill="#f01818" />
      <path d="M541 921 556 899" stroke="#1414e0" strokeWidth="2" /><path d="M558 897 556 909 549 904Z" fill="#1414e0" />
      <path d="M541 921 543 940" stroke="#10d010" strokeWidth="2" /><path d="M543 942 539 930 547 930Z" fill="#10d010" />
      <text x="517" y="906" fontSize="9" fill="#f01818" fontFamily="Liberation Sans">X</text>
      <text x="547" y="943" fontSize="9" fill="#10d010" fontFamily="Liberation Sans">Y</text>
      <text x="561" y="898" fontSize="9" fill="#1414e0" fontFamily="Liberation Sans">Z</text>
    </svg>
  </div>
);

const RightPanel = () => (
  <div className="flex-1 min-w-0 flex flex-col bg-[#eceef0]">
    <Toolbar />
    <Viewport />
    <div className="h-[20px] shrink-0 bg-[#e8e9ec] flex pl-[3px]">
      <div className="w-[103px] bg-white border-x border-t border-[#a9adb0] flex items-center justify-center text-[12px] text-[#1c1c1c]">撑衣杆-三维*</div>
    </div>
  </div>
);

export default function App() {
  return (
    <div className="w-[1920px] h-[1040px] overflow-hidden flex flex-col bg-white [font-family:'Noto_Sans','Noto_Sans_CJK_SC',sans-serif]">
      <Defs />
      <TitleBar />
      <Tabs />
      <Ribbon />
      <div className="flex-1 min-h-0 flex">
        <LeftPanel />
        <RightPanel />
      </div>
      <div className="h-[30px] shrink-0 bg-[#eceef0] border-y border-[#a9adb0] flex items-center justify-between pl-[6px] pr-[38px] text-[12px]">
        <span className="text-[#7d7d7d] tracking-[0.1px]">D:/桌面/实习/撑衣杆/撑衣杆.ibe</span>
        <span className="text-[#2a2a2a]">1.7 m x 0.98 m</span>
      </div>
      <div className="h-[9px] shrink-0 bg-[#e4eefa]">
        <div className="ml-[358px] w-[1135px] h-px bg-[#1c4c9c]" />
      </div>
    </div>
  );
}
